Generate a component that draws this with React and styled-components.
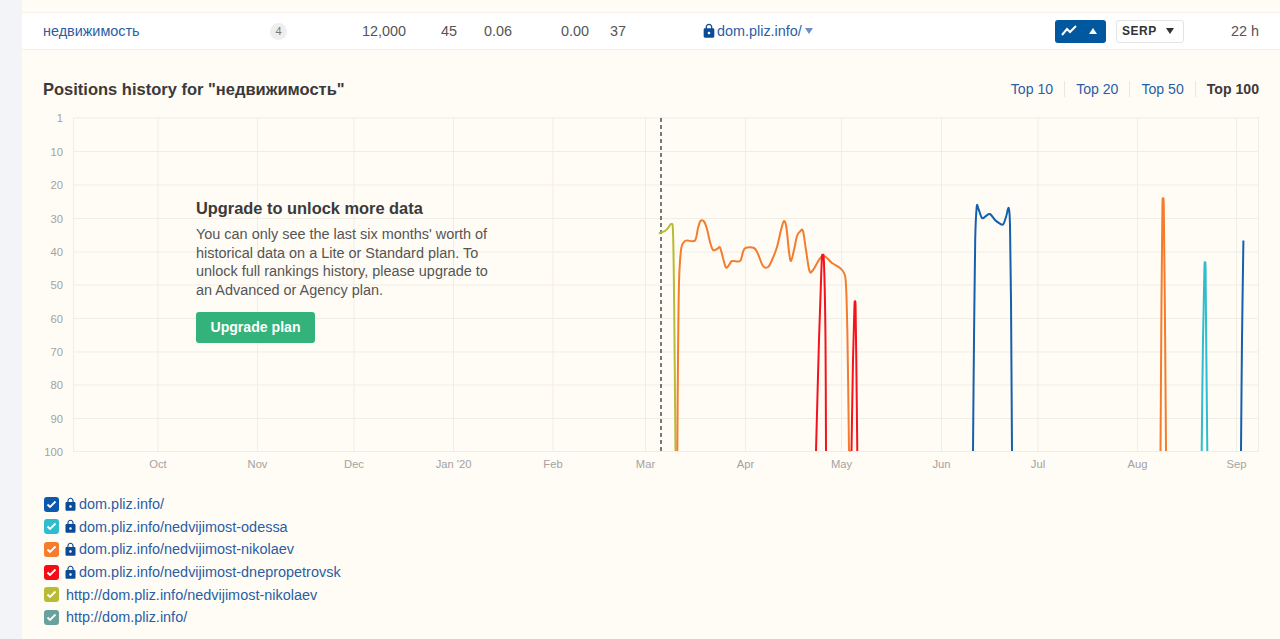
import styled, { createGlobalStyle } from "styled-components";
import { MdLock } from "react-icons/md";

const GlobalStyle = createGlobalStyle`
  html, body {
    margin: 0;
    height: 639px;
    overflow: hidden;
    background: #fffcf5;
    font-family: "Liberation Sans", Arial, sans-serif;
    color: #444;
  }
`;

const Page = styled.div`
  display: flex;
  height: 639px;
`;
const SideStrip = styled.div`
  width: 22px;
  flex: none;
  background: #f3f4f8;
`;
const Main = styled.div`
  flex: 1;
  min-width: 0;
  padding-top: 12px;
`;
const KeywordRow = styled.div`
  display: grid;
  grid-template-columns: 21px 227px 18px 118px 51px 55px 77px 115px 351px 51px 10px 68px 75px 21px;
  align-items: center;
  height: 36px;
  background: #fff;
  border-top: 1px solid #f5f2ea;
  border-bottom: 1px solid #f3f0e8;
  font-size: 14.4px;
  color: #555;
`;
const KeywordLink = styled.a`
  grid-column: 2;
  color: #2a5ea5;
`;
const CountBadge = styled.span`
  width: 17px;
  height: 17px;
  border-radius: 50%;
  background: #eeeeee;
  color: #777;
  font-size: 11px;
  line-height: 17px;
  text-align: center;
`;
const NumberCell = styled.span`
  text-align: right;
`;
const PositionCell = styled.span`
  padding-left: 21px;
`;
const UrlCell = styled.span`
  display: flex;
  align-items: center;
  color: #2a5ea5;
  svg {
    color: #0b4a97;
    margin-left: -3px;
  }
`;
const Arrow = styled.i`
  display: inline-block;
  width: 0;
  height: 0;
  border-left: ${(p) => p.size}px solid transparent;
  border-right: ${(p) => p.size}px solid transparent;
  ${(p) => (p.up ? "border-bottom" : "border-top")}: ${(p) => p.size + 2}px solid ${(p) => p.color};
`;
const UrlArrow = styled(Arrow)`
  margin-left: 3px;
`;
const GraphToggle = styled.button`
  display: flex;
  align-items: center;
  justify-content: space-between;
  box-sizing: border-box;
  width: 51px;
  height: 23px;
  padding: 0 9px 0 6px;
  border: 0;
  border-radius: 3px;
  background: #01589f;
`;
const SerpButton = styled.button`
  grid-column: 12;
  display: flex;
  align-items: center;
  justify-content: space-between;
  box-sizing: border-box;
  width: 68px;
  height: 23px;
  padding: 0 9px 0 5px;
  border: 1px solid #e4e4e4;
  border-radius: 3px;
  background: #fff;
  color: #333;
  font: bold 12px "Liberation Sans", Arial, sans-serif;
  letter-spacing: 0.5px;
`;
const AgeCell = styled.span`
  text-align: right;
`;
const Panel = styled.div`
  padding: 0 21px;
`;
const PanelHeader = styled.div`
  display: flex;
  justify-content: space-between;
  align-items: center;
  height: 20px;
  padding-top: 29px;
`;
const PanelTitle = styled.h2`
  margin: 0;
  font-size: 16.5px;
  font-weight: bold;
  color: #3a3a3a;
`;
const TopTabs = styled.div`
  display: flex;
  align-items: center;
`;
const TopTab = styled.a`
  font-size: 14.1px;
  line-height: 16px;
  font-weight: ${(p) => (p.active ? "bold" : "normal")};
  color: ${(p) => (p.active ? "#3a3a3a" : "#2a5ea5")};
  padding: 0 11px;
  border-right: 1px solid ${(p) => (p.active ? "transparent" : "#ebe8df")};
  &:last-child {
    padding-right: 0;
    border-right: 0;
  }
`;
const ChartWrap = styled.div`
  position: relative;
  height: 371px;
  margin-top: 11px;
`;
const ChartSvg = styled.svg`
  display: block;
`;
const AxisText = styled.text`
  font-family: "Liberation Sans", Arial, sans-serif;
  font-size: 11.2px;
  fill: #a2a2a2;
`;
const UpgradeCard = styled.div`
  position: absolute;
  left: 153px;
  top: 88px;
  width: 300px;
`;
const UpgradeTitle = styled.h3`
  margin: 0 0 7px;
  font-size: 16.4px;
  line-height: 20px;
  font-weight: bold;
  color: #3a3a3a;
`;
const UpgradeText = styled.p`
  margin: 0 0 12px;
  font-size: 14.45px;
  line-height: 18.7px;
  color: #555;
`;
const UpgradeButton = styled.button`
  width: 119px;
  height: 31px;
  border: 0;
  border-radius: 3px;
  background: #33b27b;
  color: #fff;
  font: bold 14.1px "Liberation Sans", Arial, sans-serif;
`;
const Legend = styled.ul`
  list-style: none;
  margin: 12px 0 0 1px;
  padding: 0;
`;
const LegendItem = styled.li`
  display: flex;
  align-items: center;
  height: 22.6px;
  font-size: 14.45px;
  color: #2a5ea5;
  svg.lock {
    color: #0b4a97;
    margin-left: -3px;
    margin-right: 1px;
    flex: none;
  }
`;
const CheckBox = styled.span`
  display: flex;
  align-items: center;
  justify-content: center;
  width: 15px;
  height: 15px;
  margin-right: 7px;
  border-radius: 3px;
  background: ${(p) => p.color};
`;

const yTicks = [
  [1, 118],
  [10, 151.5],
  [20, 185],
  [30, 218.5],
  [40, 252],
  [50, 285],
  [60, 318.5],
  [70, 352],
  [80, 385],
  [90, 418.5],
  [100, 451.5],
];
const xTicks = [
  ["Oct", 158],
  ["Nov", 257.5],
  ["Dec", 354],
  ["Jan '20", 453.5],
  ["Feb", 553],
  ["Mar", 645.5],
  ["Apr", 745.5],
  ["May", 841.5],
  ["Jun", 941.5],
  ["Jul", 1038],
  ["Aug", 1137.5],
  ["Sep", 1236.5],
];

// smooth line through the points (catmull-rom to bezier)
const smooth = (pts) => {
  let d = `M${pts[0][0]} ${pts[0][1]}`;
  for (let i = 0; i < pts.length - 1; i++) {
    const p0 = pts[i - 1] || pts[i];
    const p1 = pts[i];
    const p2 = pts[i + 1];
    const p3 = pts[i + 2] || p2;
    const c1x = p1[0] + (p2[0] - p0[0]) / 6;
    const c1y = p1[1] + (p2[1] - p0[1]) / 6;
    const c2x = p2[0] - (p3[0] - p1[0]) / 6;
    const c2y = p2[1] - (p3[1] - p1[1]) / 6;
    d += ` C${c1x.toFixed(1)} ${c1y.toFixed(1)} ${c2x.toFixed(1)} ${c2y.toFixed(1)} ${p2[0]} ${p2[1]}`;
  }
  return d;
};

const BLUE = "#1560ae";
const CYAN = "#2fbdcd";
const ORANGE = "#f47c2c";
const RED = "#f5121c";
const OLIVE = "#b8bb34";
const TEAL = "#67a29c";

const series = [
  {
    color: OLIVE,
    pts: [[659, 233.5], [662, 232], [665, 231], [668, 228], [671.5, 224], [673, 232], [674, 290], [675.5, 451]],
  },
  {
    color: ORANGE,
    pts: [
      [677.3, 451], [678, 360], [679, 283], [681, 250], [684, 242], [687, 240.5], [695, 240.5], [698, 228],
      [700.5, 221], [704, 221.5], [707, 229], [710, 242], [713, 250], [717, 249], [720, 247.5], [723, 258], [726, 267.5], [729, 265],
      [732, 261], [740, 261], [743, 252], [745.5, 248], [754, 248], [758, 254], [763, 266], [768, 267],
      [772, 260], [777, 247], [781, 230], [784, 221], [786.5, 228], [789, 252], [791, 261], [794, 250], [797, 236], [800, 231.5],
      [803, 231], [806, 250], [809.5, 271], [813, 270], [822.5, 256], [832, 263], [840, 268], [844, 273],
      [846, 285], [847.5, 340], [849, 451],
    ],
  },
  { color: RED, pts: [[816, 451], [819, 340], [821.6, 264], [822.8, 256], [824, 264], [825.5, 340], [826, 451]] },
  { color: ORANGE, pts: [[849.5, 451], [850.5, 451]] },
  { color: RED, pts: [[851.5, 451], [853, 360], [854.4, 308], [855, 302], [855.6, 308], [856.3, 360], [857.3, 451]] },
  {
    color: BLUE,
    pts: [
      [973, 451], [974, 340], [975.2, 240], [976.7, 207], [978.5, 209], [982, 218], [986, 216], [990, 214], [995, 220],
      [999, 223], [1003, 224.5], [1006, 217], [1008.7, 208], [1010, 225], [1011, 300], [1012, 451],
    ],
  },
  { color: ORANGE, pts: [[1160.5, 451], [1161.5, 300], [1162.4, 208], [1163, 201], [1163.8, 208], [1164.8, 300], [1166, 451]] },
  { color: CYAN, pts: [[1201.7, 451], [1203, 340], [1204.4, 270], [1205, 264], [1205.6, 270], [1206.2, 340], [1207.3, 451]] },
  { color: BLUE, pts: [[1241, 451], [1242, 340], [1243.4, 240.5]] },
];

const legend = [
  { color: "#0b58ad", url: "dom.pliz.info/", secure: true },
  { color: CYAN, url: "dom.pliz.info/nedvijimost-odessa", secure: true },
  { color: ORANGE, url: "dom.pliz.info/nedvijimost-nikolaev", secure: true },
  { color: "#f20d17", url: "dom.pliz.info/nedvijimost-dnepropetrovsk", secure: true },
  { color: OLIVE, url: "http://dom.pliz.info/nedvijimost-nikolaev" },
  { color: TEAL, url: "http://dom.pliz.info/" },
];

const GRID = "#f0ede5";

const PositionsChart = () => (
  <ChartSvg width="1216" height="371" viewBox="43 110 1216 371">
    {yTicks.map(([label, y]) => (
      <g key={label}>
        <line x1="73" x2="1259" y1={y} y2={y} stroke={GRID} />
        <AxisText x="63" y={y + 4} textAnchor="end">{label}</AxisText>
      </g>
    ))}
    {xTicks.map(([label, x]) => (
      <g key={label}>
        <line x1={x} x2={x} y1="118" y2="451.5" stroke={GRID} />
        <AxisText x={x} y="468" textAnchor="middle">{label}</AxisText>
      </g>
    ))}
    <line x1="73.5" x2="73.5" y1="118" y2="451.5" stroke={GRID} />
    <line x1="1258.5" x2="1258.5" y1="118" y2="451.5" stroke={GRID} />
    <line x1="661" x2="661" y1="118" y2="451.5" stroke="#222" strokeWidth="1.2" strokeDasharray="4 3" />
    {series.map((s, i) => (
      <path key={i} d={smooth(s.pts)} fill="none" stroke={s.color} strokeWidth="2" strokeLinejoin="round" />
    ))}
  </ChartSvg>
);

export default function App() {
  return (
    <Page>
      <GlobalStyle />
      <SideStrip />
      <Main>
        <KeywordRow>
          <KeywordLink>недвижимость</KeywordLink>
          <CountBadge>4</CountBadge>
          <NumberCell>12,000</NumberCell>
          <NumberCell>45</NumberCell>
          <NumberCell>0.06</NumberCell>
          <NumberCell>0.00</NumberCell>
          <PositionCell>37</PositionCell>
          <UrlCell>
            <MdLock size={16} />
            dom.pliz.info/
            <UrlArrow size={4.5} color="#6f8fc4" />
          </UrlCell>
          <GraphToggle>
            <svg width="16" height="12" viewBox="0 0 16 12">
              <polyline points="1,10 6,4 9,7 15,1" fill="none" stroke="#fff" strokeWidth="2" />
            </svg>
            <Arrow up size={4.5} color="#fff" />
          </GraphToggle>
          <SerpButton>
            SERP
            <Arrow size={4.5} color="#333" />
          </SerpButton>
          <AgeCell>22 h</AgeCell>
        </KeywordRow>
        <Panel>
          <PanelHeader>
            <PanelTitle>Positions history for "недвижимость"</PanelTitle>
            <TopTabs>
              <TopTab>Top 10</TopTab>
              <TopTab>Top 20</TopTab>
              <TopTab>Top 50</TopTab>
              <TopTab active>Top 100</TopTab>
            </TopTabs>
          </PanelHeader>
          <ChartWrap>
            <PositionsChart />
            <UpgradeCard>
              <UpgradeTitle>Upgrade to unlock more data</UpgradeTitle>
              <UpgradeText>
                You can only see the last six months' worth of historical data on a Lite or Standard plan. To unlock
                full rankings history, please upgrade to an Advanced or Agency plan.
              </UpgradeText>
              <UpgradeButton>Upgrade plan</UpgradeButton>
            </UpgradeCard>
          </ChartWrap>
          <Legend>
            {legend.map((item) => (
              <LegendItem key={item.url}>
                <CheckBox color={item.color}>
                  <svg width="11" height="9" viewBox="0 0 11 9">
                    <polyline points="1.5,4.5 4,7 9.5,1.5" fill="none" stroke="#fff" strokeWidth="1.8" />
                  </svg>
                </CheckBox>
                {item.secure && <MdLock className="lock" size={15} />}
                {item.url}
              </LegendItem>
            ))}
          </Legend>
        </Panel>
      </Main>
    </Page>
  );
}
